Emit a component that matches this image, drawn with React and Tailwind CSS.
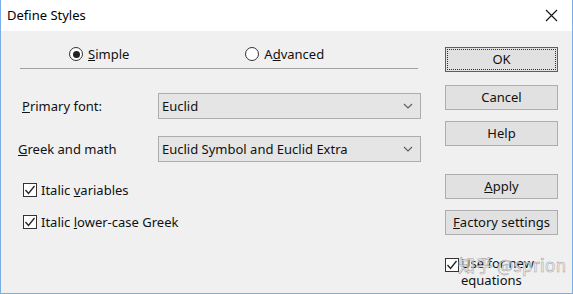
import React from 'react';

const font = { fontFamily: '"Noto Sans", "Open Sans", "Liberation Sans", sans-serif' };

function Chevron() {
  return (
    <svg width="10" height="6" viewBox="0 0 10 6" className="text-[#606060]">
      <path d="M1 1 L5 5 L9 1" fill="none" stroke="currentColor" strokeWidth="1.2" />
    </svg>
  );
}

function Check() {
  return (
    <span className="w-[14px] h-[14px] border border-[#333] bg-white flex items-center justify-center shrink-0">
      <svg width="12" height="12" viewBox="0 0 12 12">
        <path d="M1.5 6 L4.5 9.5 L10.5 2" fill="none" stroke="#222" strokeWidth="1.3" />
      </svg>
    </span>
  );
}

function Radio({ on }) {
  return (
    <span className="w-[14px] h-[14px] rounded-full border border-[#333] bg-white flex items-center justify-center shrink-0">
      {on && <span className="w-[7px] h-[7px] rounded-full bg-[#222]"></span>}
    </span>
  );
}

function Select({ value }) {
  return (
    <div className="w-[263px] h-[26px] border border-[#adadad] bg-[#e5e5e5] flex items-center pl-[3px] pr-[7px]">
      <span className="flex-1 text-[#111]">{value}</span>
      <Chevron />
    </div>
  );
}

function Button({ children, primary }) {
  return (
    <div
      className={
        'w-[113px] h-[25px] bg-[#e1e1e1] flex items-center justify-center ' +
        (primary ? 'border border-[#0078d7] p-[1px]' : 'border border-[#adadad]')
      }
    >
      {primary ? (
        <div className="w-full h-full border border-dotted border-[#333] flex items-center justify-center">
          {children}
        </div>
      ) : (
        children
      )}
    </div>
  );
}

export default function App() {
  return (
    <div style={font} className="relative w-[573px] h-[294px] overflow-hidden bg-[#f0f0f0] border-x border-b border-[#7aaee6] text-[13px] text-[#111] leading-none">
      {/* Title bar */}
      <div className="h-[31px] bg-white flex items-center pl-[6px] pr-[14px]">
        <span className="flex-1 text-[13px] text-black">Define Styles</span>
        <svg width="13" height="13" viewBox="0 0 13 13">
          <path d="M1 1 L12 12 M12 1 L1 12" stroke="#111" strokeWidth="1.1" />
        </svg>
      </div>

      <div className="flex">
        {/* Left column */}
        <div className="w-[443px] flex flex-col">
          <div className="h-[18px] mt-[14px] flex items-center">
            <div className="ml-[68px] flex items-center gap-[5px]">
              <Radio on />
              <span><span className="underline">S</span>imple</span>
            </div>
            <div className="ml-[116px] flex items-center gap-[5px]">
              <Radio />
              <span>A<span className="underline">d</span>vanced</span>
            </div>
          </div>
          <div className="mt-[5px] ml-[19px] w-[398px] h-px bg-[#a0a0a0]"></div>

          <div className="mt-[24px] flex items-center">
            <span className="ml-[21px] w-[136px]"><span className="underline">P</span>rimary font:</span>
            <Select value="Euclid" />
          </div>
          <div className="mt-[17px] flex items-center">
            <span className="ml-[17px] w-[140px]"><span className="underline">G</span>reek and math</span>
            <Select value="Euclid Symbol and Euclid Extra" />
          </div>

          <div className="mt-[19px] ml-[22px] h-[18px] flex items-center gap-[4px]">
            <Check />
            <span>Italic <span className="underline">v</span>ariables</span>
          </div>
          <div className="mt-[14px] ml-[22px] h-[18px] flex items-center gap-[4px]">
            <Check />
            <span>Italic <span className="underline">l</span>ower-case Greek</span>
          </div>
        </div>

        {/* Right column */}
        <div className="flex flex-col ml-[1px]">
          <div className="mt-[16px]"><Button primary>OK</Button></div>
          <div className="mt-[13px]"><Button>Cancel</Button></div>
          <div className="mt-[11px]"><Button>Help</Button></div>
          <div className="mt-[28px]"><Button><span><span className="underline">A</span>pply</span></Button></div>
          <div className="mt-[11px]"><Button><span><span className="underline">F</span>actory settings</span></Button></div>
          <div className="mt-[20px] flex items-start gap-[2px]">
            <div className="mt-[3px]"><Check /></div>
            <span className="w-[90px] leading-[17px]">Use for new<br />equations</span>
          </div>
        </div>
      </div>

      {/* watermark */}
      <div className="absolute left-[457px] top-[256px] text-[17px] text-white/70 tracking-wide pointer-events-none" style={{ fontFamily: '"Noto Sans CJK SC", "Noto Sans", sans-serif', WebkitTextStroke: '0.5px #999' }}>
        知乎 @sprion
      </div>
    </div>
  );
}
